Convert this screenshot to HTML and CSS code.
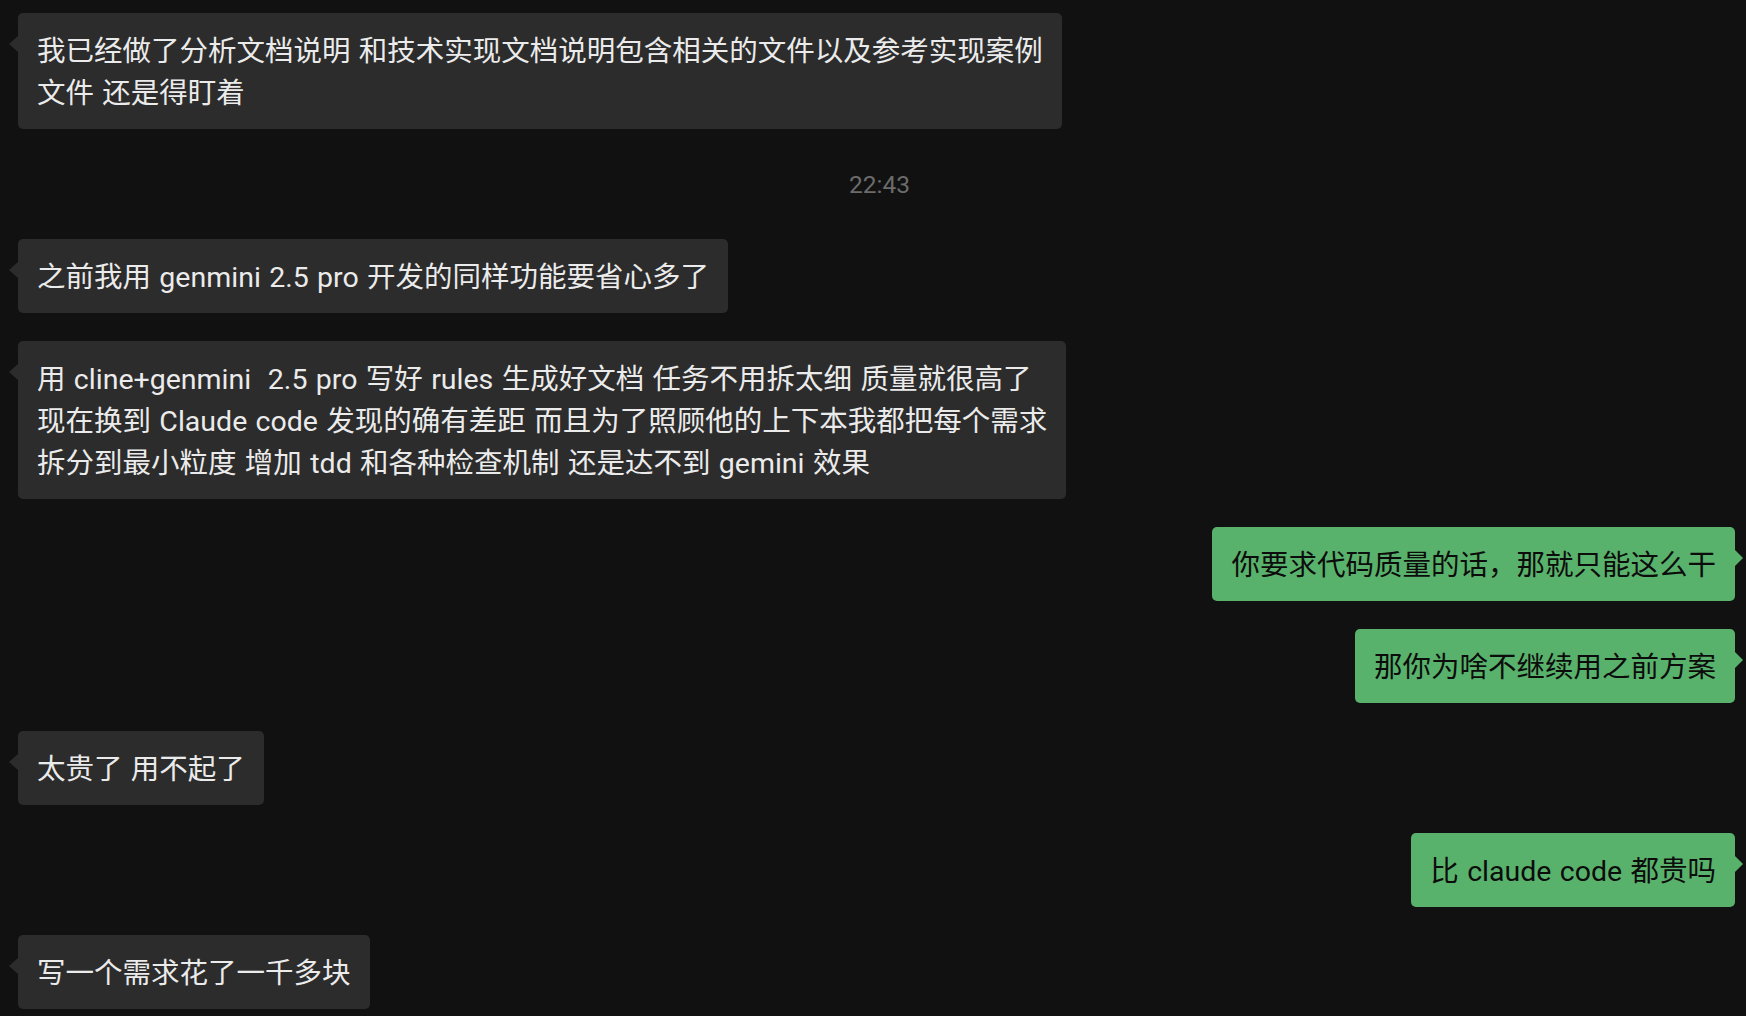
FILE: index.html
```html
<!DOCTYPE html>
<html lang="zh-CN">
<head>
<meta charset="utf-8">
<title>Chat</title>
<link rel="stylesheet" href="styles.css">
</head>
<body>
<div class="chat">
  <div class="row left"><div class="bubble in">我已经做了分析文档说明 和技术实现文档说明包含相关的文件以及参考实现案例<br>文件 还是得盯着</div></div>
  <div class="time">22:43</div>
  <div class="row left"><div class="bubble in">之前我用 genmini 2.5 pro 开发的同样功能要省心多了</div></div>
  <div class="row left"><div class="bubble in">用 cline+genmini&nbsp; 2.5 pro 写好 rules 生成好文档 任务不用拆太细 质量就很高了<br>现在换到 Claude code 发现的确有差距 而且为了照顾他的上下本我都把每个需求<br>拆分到最小粒度 增加 tdd 和各种检查机制 还是达不到 gemini 效果</div></div>
  <div class="row right"><div class="bubble out">你要求代码质量的话，那就只能这么干</div></div>
  <div class="row right"><div class="bubble out">那你为啥不继续用之前方案</div></div>
  <div class="row left"><div class="bubble in">太贵了 用不起了</div></div>
  <div class="row right"><div class="bubble out">比 claude code 都贵吗</div></div>
  <div class="row left"><div class="bubble in">写一个需求花了一千多块</div></div>
</div>
</body>
</html>
```

FILE: styles.css
```css
html, body {
  margin: 0;
  padding: 0;
  background: #111111;
  height: 100%;
  overflow: hidden;
}

.chat {
  display: flex;
  flex-direction: column;
  gap: 28px;
  padding: 13px 11px 0 18px;
  font-family: "Roboto", "Noto Sans CJK SC", sans-serif;
}

.row {
  display: flex;
}

.row.left {
  justify-content: flex-start;
}

.row.right {
  justify-content: flex-end;
}

.bubble {
  position: relative;
  max-width: 1080px;
  padding: 18px 19px 14px;
  border-radius: 5px;
  font-size: 28.5px;
  line-height: 42px;
  word-spacing: 1.3px;
  white-space: nowrap;
}

.bubble.in {
  background: #2c2c2c;
  color: #ebebeb;
}

.bubble.out {
  background: #59b26b;
  color: #0c0c0c;
}

.bubble.in::before {
  content: "";
  position: absolute;
  left: -9px;
  top: 23px;
  border-top: 8px solid transparent;
  border-bottom: 8px solid transparent;
  border-right: 9px solid #2c2c2c;
}

.bubble.out::after {
  content: "";
  position: absolute;
  right: -8px;
  top: 23px;
  border-top: 8px solid transparent;
  border-bottom: 8px solid transparent;
  border-left: 8px solid #59b26b;
}

.time {
  height: 54px;
  line-height: 56px;
  text-align: center;
  padding-left: 6px;
  font-size: 24.5px;
  color: #6b6b6b;
}
```
